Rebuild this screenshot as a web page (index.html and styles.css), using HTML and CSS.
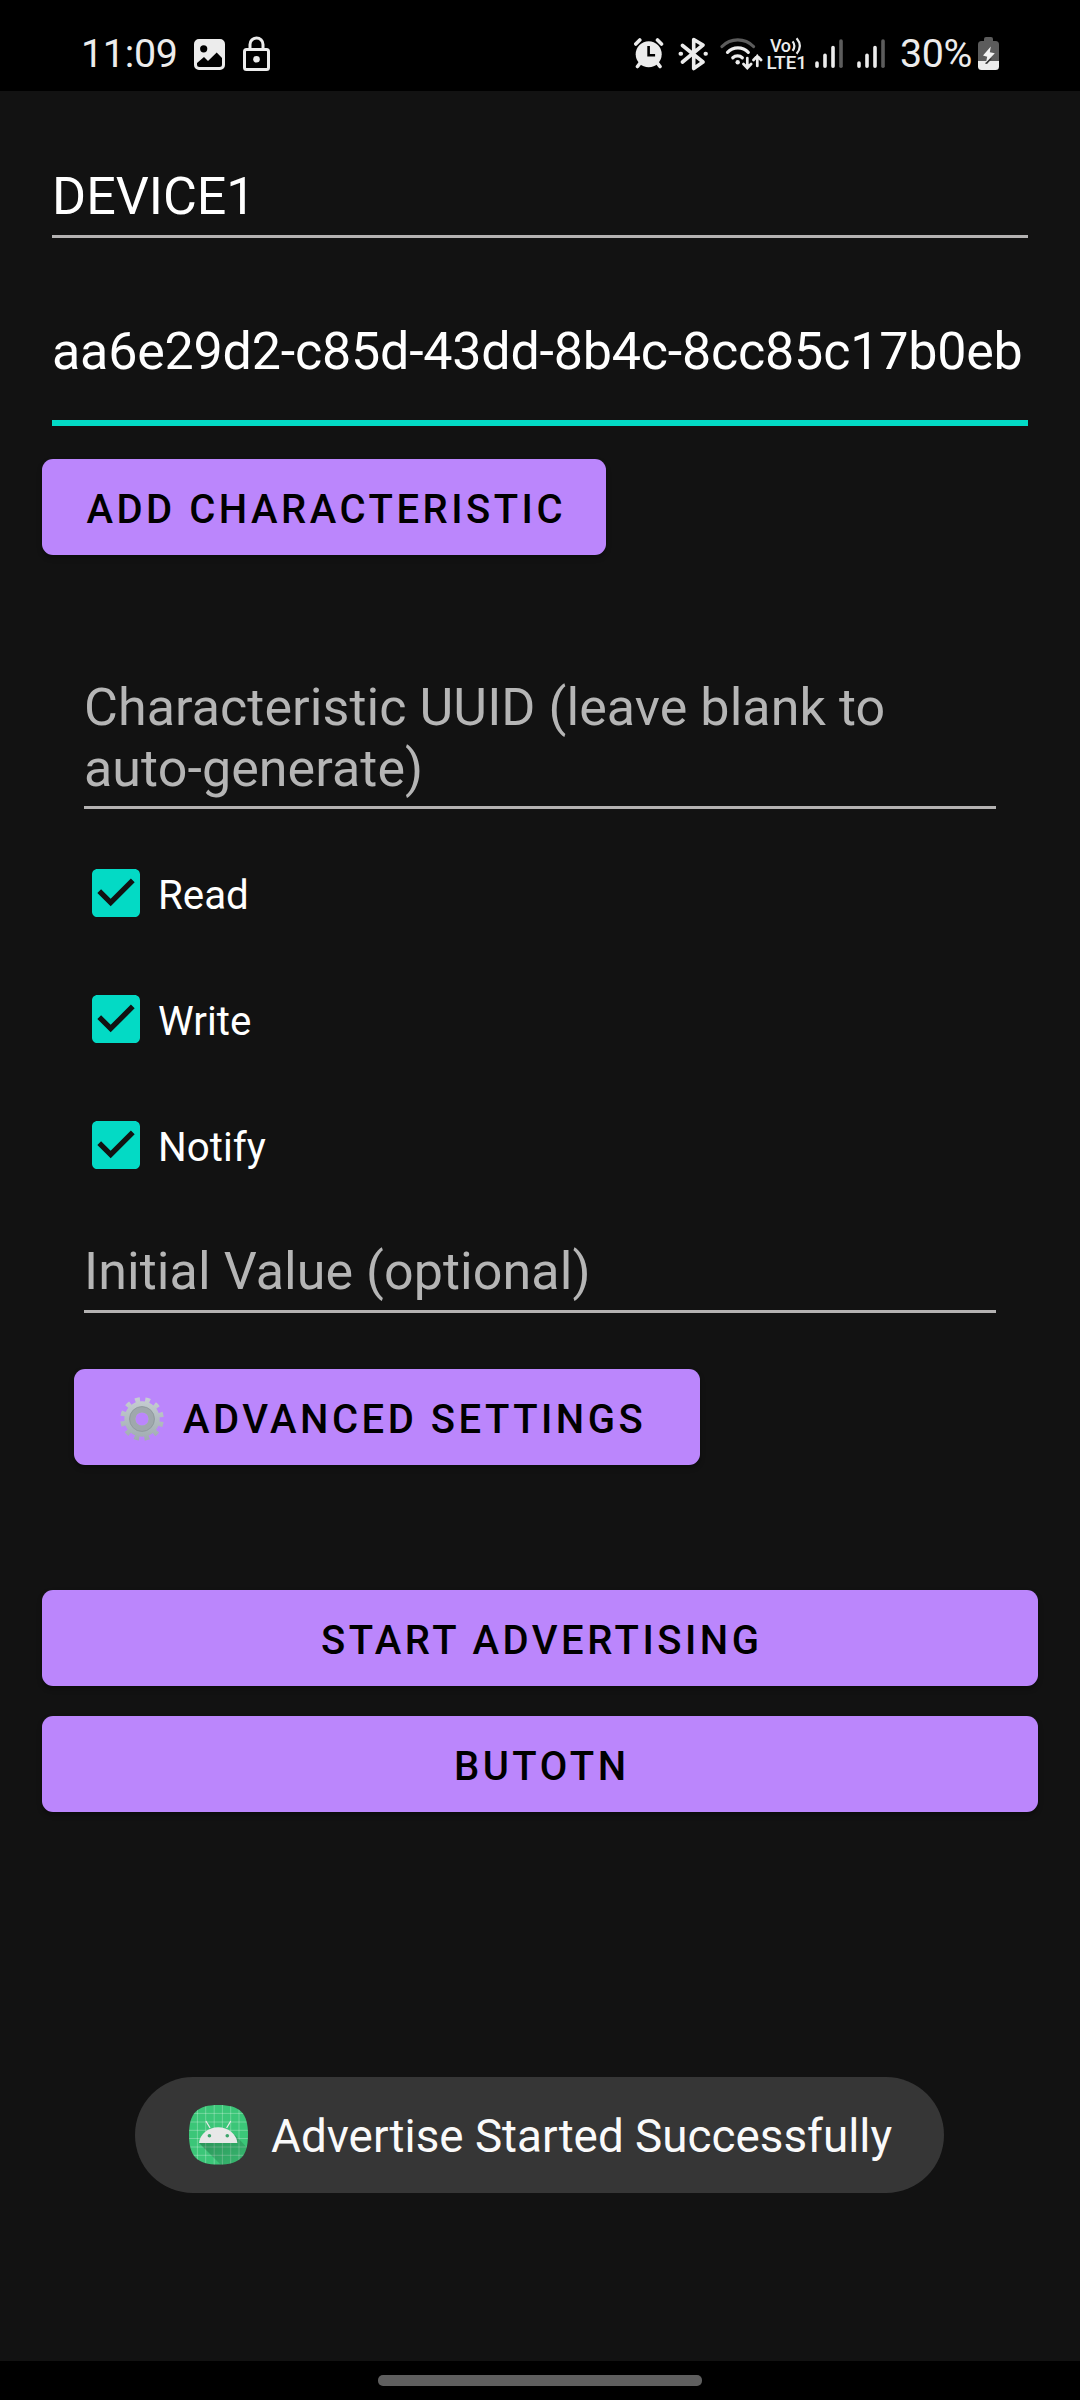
FILE: index.html
```html
<!DOCTYPE html>
<html lang="en">
<head>
<meta charset="utf-8">
<title>BLE Advertiser</title>
<link rel="stylesheet" href="styles.css">
</head>
<body>
<svg class="defs" width="0" height="0" aria-hidden="true">
  <symbol id="checkbox" viewBox="3 3 18 18">
    <path d="M19 3H5c-1.1 0-2 .9-2 2v14c0 1.1.9 2 2 2h14c1.1 0 2-.9 2-2V5c0-1.1-.9-2-2-2zm-9 14l-5-5 1.41-1.41L10 14.17l7.59-7.59L19 8l-9 9z" fill="#03dac5"/>
  </symbol>
  <symbol id="signal" viewBox="0 0 28 30">
    <g stroke-width="3.6" stroke-linecap="round" stroke="#ececec">
      <path d="M2 24v3.200M10 16.200v11M18 8.500v18.700"/><path d="M26 2v25.200" stroke="#5c5c5c"/>
    </g>
  </symbol>
</svg>
<div class="screen">
  <header class="status">
    <span class="clock">11:09</span>
    <svg class="ic-photo" width="31" height="31" viewBox="0 0 31 31"><path fill="#ececec" fill-rule="evenodd" d="M5 0h21a5 5 0 0 1 5 5v21a5 5 0 0 1-5 5H5a5 5 0 0 1-5-5V5a5 5 0 0 1 5-5zM9.700 6.200a3.600 3.600 0 1 0 0 7.200 3.600 3.600 0 0 0 0-7.200zM3 24v1.500A2.500 2.500 0 0 0 5.500 28h20a2.500 2.500 0 0 0 2.500-2.500V19l-5.300-5.500-8.700 8.500-4-4z"/></svg>
    <svg class="ic-lock" width="27" height="35" viewBox="0 0 27 35" fill="none" stroke="#ececec" stroke-width="3"><rect x="1.500" y="13.500" width="24" height="20" rx="2"/><path d="M7 13V8.500a6.500 6.500 0 0 1 13 0V13"/><circle cx="13.500" cy="23.300" r="3.300" fill="#ececec" stroke="none"/></svg>
    <svg class="ic-alarm" width="30" height="32" viewBox="634 37 30 32" fill="none" stroke="#ececec" stroke-linecap="round"><circle cx="648.700" cy="54.300" r="13" fill="#ececec" stroke="none"/><path stroke-width="3.600" d="M635.800 44l4-4M661.500 44l-4-4M640.500 62.500l-3 4M657 62.500l3 4"/><path stroke="#000" stroke-width="2.600" stroke-linecap="butt" d="M648.600 46v9.300h6.500"/></svg>
    <svg class="ic-bt" width="30" height="34" viewBox="678 37 30 34" fill="none" stroke="#ececec" stroke-width="3.600" stroke-linejoin="round" stroke-linecap="round"><path d="M682.500 45.500L703 62l-9.300 6.500V39.500L703 45l-20.500 17"/><path stroke-width="4" d="M680.500 53.700h.6M705.500 53.700h.4"/></svg>
    <svg class="ic-wifi" width="43" height="34" viewBox="720 37 43 34" fill="none" stroke="#ececec" stroke-width="3.200" stroke-linecap="round"><path stroke="#5c5c5c" d="M722 46.500a22 22 0 0 1 31.500 0"/><path d="M727.500 52.300a14.500 14.500 0 0 1 20.800 0M732.800 57.800a7 7 0 0 1 9.500 0"/><circle cx="737.700" cy="62.200" r="2.200" fill="#ececec" stroke="none"/><path stroke-width="2.700" d="M747.300 58v9.800M743.500 64l3.800 4 3.800-4M757.300 66v-9.800M753.500 60l3.800-4 3.800 4"/></svg>
    <svg class="ic-volte" width="44" height="46" viewBox="764 31 44 46"><g fill="#ececec" font-family="Roboto" font-size="18" font-weight="500"><text x="770" y="51.600" textLength="21">Vo</text><text x="766.500" y="69" textLength="40.500" lengthAdjust="spacingAndGlyphs">LTE1</text></g><path fill="none" stroke="#ececec" stroke-width="2.200" d="M792.600 41.300q3.600 4.700 0 9.500M796.600 38.300q6.500 7.700 0 15.500"/></svg>
    <svg class="ic-sig" width="28" height="30"><use href="#signal"/></svg>
    <svg class="ic-sig2" width="28" height="30"><use href="#signal"/></svg>
    <span class="percent">30%</span>
    <svg class="ic-batt" width="21" height="33" viewBox="0 0 21 33"><path fill="#5c5c5c" d="M6 4V2q0-2 2-2h5q2 0 2 2v2h2.500q3.500 0 3.500 3.500V24H0V7.500Q0 4 3.500 4z"/><path fill="#ececec" d="M0 24h21v5.500q0 3.500-3.500 3.500h-14Q0 33 0 29.500z"/><path d="M7 26.500l4-5h3l-5 5.500z" fill="#333"/><path fill="#f2f2f2" d="M12.800 9.500L5 18.500l4.200 1.200L8 25.500l8.800-9.200-5-1z"/></svg>
  </header>

  <main class="content">
    <div class="field device">DEVICE1</div>
    <div class="field service">aa6e29d2-c85d-43dd-8b4c-8cc85c17b0eb</div>
    <button class="btn add"><span>ADD CHARACTERISTIC</span></button>

    <section class="characteristic">
      <div class="field hint">Characteristic UUID (leave blank to<br>auto-generate)</div>
      <div class="checks">
        <label class="check"><svg width="48" height="48"><use href="#checkbox"/></svg><span>Read</span></label>
        <label class="check"><svg width="48" height="48"><use href="#checkbox"/></svg><span>Write</span></label>
        <label class="check"><svg width="48" height="48"><use href="#checkbox"/></svg><span>Notify</span></label>
      </div>
      <div class="field hint initial">Initial Value (optional)</div>
      <button class="btn advanced">
        <svg class="gear" width="44" height="44" viewBox="-22 -22 44 44">
          <defs><linearGradient id="metal" gradientUnits="userSpaceOnUse" x1="0" y1="-21" x2="0" y2="21"><stop offset="0" stop-color="#c6ced2"/><stop offset="1" stop-color="#a0acb1"/></linearGradient></defs>
          <circle r="18.800" fill="none" stroke="url(#metal)" stroke-width="6" stroke-dasharray="4.600 5.244" stroke-dashoffset="7.222"/>
          <circle r="12.200" fill="none" stroke="url(#metal)" stroke-width="11"/>
          <circle r="9.600" fill="none" stroke="#9fa8ac" stroke-width="6"/>
          <circle r="12.400" fill="none" stroke="#919b9f" stroke-width="1"/>
        </svg>
        <span>ADVANCED SETTINGS</span>
      </button>
    </section>

    <button class="btn wide start"><span>START ADVERTISING</span></button>
    <button class="btn wide"><span>BUTOTN</span></button>

    <div class="toast">
      <svg width="59" height="60" viewBox="0 0 59 60">
        <defs><clipPath id="squircle"><path d="M29.500 0C51 0 59 8 59 29.700S51 59.500 29.500 59.500 0 51.500 0 29.700 8 0 29.500 0z"/></clipPath>
        <linearGradient id="shade" x1="0" y1="0" x2="1" y2="1"><stop offset="0" stop-color="#000" stop-opacity=".28"/><stop offset="1" stop-color="#000" stop-opacity=".06"/></linearGradient></defs>
        <g clip-path="url(#squircle)">
          <rect width="59" height="60" fill="#3bc678"/>
          <path d="M8.400 0v60M16.700 0v60M25.200 0v60M33.400 0v60M41.700 0v60M50 0v60M0 8.400h59M0 17h59M0 25.300h59M0 33.500h59M0 42h59M0 50.300h59" stroke="#fff" stroke-opacity=".35" stroke-width=".8"/>
          <path d="M10 38l22 22h27V43.500L46 30z" fill="url(#shade)"/>
        </g>
        <path d="M10 38a19.300 17.500 0 0 1 38.400 0z" fill="#e8e8e8"/>
        <path d="M17.200 16.500l3.600 6M41.500 16.500l-3.600 6" stroke="#e8e8e8" stroke-width="1.300" stroke-linecap="round"/>
        <circle cx="20.400" cy="30.800" r="1.800" fill="#3ba56b"/><circle cx="38.300" cy="30.800" r="1.800" fill="#3ba56b"/>
      </svg>
      <span>Advertise Started Successfully</span>
    </div>
  </main>
  <footer class="nav"><div class="handle"></div></footer>
</div>
</body>
</html>
```
FILE: styles.css
```css
* { box-sizing: border-box; }
body { margin: 0; background: #121212; font-family: Roboto, sans-serif; }
.defs { position: absolute; }
svg { display: block; flex: none; }
.screen { width: 1080px; height: 2400px; display: flex; flex-direction: column; overflow: hidden; }

.status { height: 91px; flex: none; background: #000; color: #ececec; display: flex; align-items: flex-start; padding-left: 81px; }
.clock { width: 113px; font-size: 39.4px; line-height: 46px; padding-top: 31px; letter-spacing: -.3px; white-space: nowrap; }
.percent { width: 78px; font-size: 39.4px; line-height: 46px; padding-top: 31px; letter-spacing: -.4px; white-space: nowrap; }
.ic-photo { margin-top: 39px; }
.ic-lock { margin: 36px 0 0 18px; }
.ic-alarm { margin: 37px 0 0 364px; }
.ic-bt { margin: 37px 0 0 14px; }
.ic-wifi { margin: 37px 0 0 12px; }
.ic-volte { margin: 31px 0 0 1px; }
.ic-sig { margin: 39px 0 0 7px; }
.ic-sig2 { margin: 39px 15px 0 14px; }
.ic-batt { margin-top: 37px; }

.content { flex: 1; display: flex; flex-direction: column; align-items: flex-start; padding: 75px 42px 0; background: #121212; }
.field { align-self: stretch; margin: 0 10px; font-size: 52px; line-height: 61px; color: #fff; border-bottom: 3px solid #b4b2b2; white-space: nowrap; padding: 0 0 8px; }
.service { margin-top: 83px; padding-bottom: 38px; border-bottom: 6px solid #03dac5; letter-spacing: -.2px; }
.hint { color: #b5b5b5; padding-bottom: 7px; letter-spacing: .08px; }

.btn { height: 96px; flex: none; border: 0; border-radius: 11px; background: #bb86fc; color: #000; font: 500 40px/92px Roboto, sans-serif; letter-spacing: 3.5px; padding: 5px 0 0 3.500px; white-space: nowrap; box-shadow: 0 3px 5px rgba(0,0,0,.35); display: flex; justify-content: center; }
.add { width: 564px; margin-top: 33px; padding-left: 4.500px; }
.wide { align-self: stretch; margin-top: 30px; }
.start { margin-top: 125px; }

.characteristic { align-self: stretch; margin-top: 122px; padding: 0 32px; display: flex; flex-direction: column; align-items: flex-start; }
.checks { margin-top: 21px; padding-left: 18px; }
.check { height: 126px; display: flex; align-items: center; gap: 18px; font-size: 40.3px; color: #fff; }
.check span { padding-top: 6px; line-height: 48px; }
.initial { margin-top: 33px; padding-bottom: 8px; }
.advanced { width: 626px; margin-top: 56px; justify-content: flex-start; padding-left: 46px; }
.gear { margin: 23px 19px 0 0; }

.toast { width: 809px; height: 116px; margin: 265px 0 0 93px; border-radius: 58px; background: #363636; color: #fafafa; display: flex; align-items: center; gap: 23px; padding-left: 54px; font-size: 45.8px; line-height: 54px; white-space: nowrap; }
.toast span { padding-top: 4px; }

.nav { height: 39px; flex: none; background: #000; display: flex; justify-content: center; padding-top: 14px; }
.handle { width: 324px; height: 11px; border-radius: 5px; background: #5f5f5f; }
```
